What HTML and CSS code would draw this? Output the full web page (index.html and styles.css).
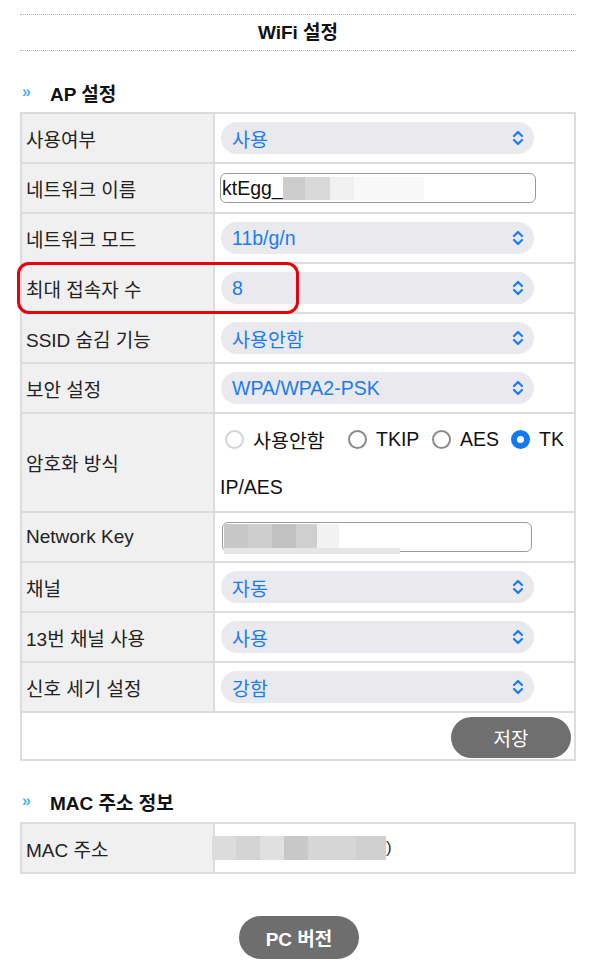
FILE: index.html
```html
<!DOCTYPE html>
<html lang="ko">
<head>
<meta charset="utf-8">
<title>WiFi 설정</title>
<link rel="stylesheet" href="styles.css">
</head>
<body>
<div class="page">
  <h1 class="title">WiFi 설정</h1>

  <div class="sec-head"><span class="chev">»</span><span>AP 설정</span></div>

  <div class="annot-wrap">
    <div class="tbl">
      <div class="lbl">사용여부</div>
      <div class="val"><div class="sel"><span>사용</span><svg class="arr" viewBox="0 0 12 16"><path d="M2 6 L6 2 L10 6 M2 10 L6 14 L10 10"/></svg></div></div>

      <div class="lbl">네트워크 이름</div>
      <div class="val"><div class="inp"><span class="inp-txt">ktEgg_</span><span class="blur b1"></span><span class="blur b2"></span><span class="blur b3"></span><span class="blur b4"></span></div></div>

      <div class="lbl">네트워크 모드</div>
      <div class="val"><div class="sel"><span>11b/g/n</span><svg class="arr" viewBox="0 0 12 16"><path d="M2 6 L6 2 L10 6 M2 10 L6 14 L10 10"/></svg></div></div>

      <div class="lbl">최대 접속자 수</div>
      <div class="val"><div class="sel"><span>8</span><svg class="arr" viewBox="0 0 12 16"><path d="M2 6 L6 2 L10 6 M2 10 L6 14 L10 10"/></svg></div></div>

      <div class="lbl">SSID 숨김 기능</div>
      <div class="val"><div class="sel"><span>사용안함</span><svg class="arr" viewBox="0 0 12 16"><path d="M2 6 L6 2 L10 6 M2 10 L6 14 L10 10"/></svg></div></div>

      <div class="lbl">보안 설정</div>
      <div class="val"><div class="sel"><span>WPA/WPA2-PSK</span><svg class="arr" viewBox="0 0 12 16"><path d="M2 6 L6 2 L10 6 M2 10 L6 14 L10 10"/></svg></div></div>

      <div class="lbl tall">암호화 방식</div>
      <div class="val tall enc">
        <div class="radios">
          <span class="ritem i1"><span class="radio off"></span><span class="rl">사용안함</span></span>
          <span class="ritem i2"><span class="radio"></span><span class="rl">TKIP</span></span>
          <span class="ritem i3"><span class="radio"></span><span class="rl">AES</span></span>
          <span class="ritem i4"><span class="radio on"></span><span class="rl">TK</span></span>
        </div>
        <div class="wrap-line">IP/AES</div>
      </div>

      <div class="lbl">Network Key</div>
      <div class="val"><div class="inp key"><span class="blur k1"></span><span class="blur k2"></span><span class="blur k3"></span><span class="blur k4"></span><span class="blur k5"></span></div></div>

      <div class="lbl">채널</div>
      <div class="val"><div class="sel"><span>자동</span><svg class="arr" viewBox="0 0 12 16"><path d="M2 6 L6 2 L10 6 M2 10 L6 14 L10 10"/></svg></div></div>

      <div class="lbl">13번 채널 사용</div>
      <div class="val"><div class="sel"><span>사용</span><svg class="arr" viewBox="0 0 12 16"><path d="M2 6 L6 2 L10 6 M2 10 L6 14 L10 10"/></svg></div></div>

      <div class="lbl">신호 세기 설정</div>
      <div class="val"><div class="sel"><span>강함</span><svg class="arr" viewBox="0 0 12 16"><path d="M2 6 L6 2 L10 6 M2 10 L6 14 L10 10"/></svg></div></div>

      <div class="save-row"><button class="btn save">저장</button></div>
    </div>
    <div class="annot"></div>
  </div>

  <div class="sec-head mac-head"><span class="chev">»</span><span>MAC 주소 정보</span></div>

  <div class="tbl">
    <div class="lbl">MAC 주소</div>
    <div class="val mac"><span class="blur m1"></span><span class="blur m2"></span><span class="blur m3"></span><span class="blur m4"></span><span class="blur m5"></span><span class="blur m6"></span><span class="mac-end">)</span></div>
  </div>

  <div class="pc-wrap"><button class="btn pc">PC 버전</button></div>
</div>
</body>
</html>
```

FILE: styles.css
```css
* { box-sizing: border-box; }
html, body { margin: 0; padding: 0; background: #fff; }
body {
  font-family: "Liberation Sans", "Noto Sans CJK KR", sans-serif;
  color: #222;
}
.page { padding: 14px 22px 0 20px; }

.title {
  margin: 0;
  height: 37px;
  border-top: 1px dotted #b8b8b8;
  border-bottom: 1px dotted #b8b8b8;
  font-size: 19px;
  font-weight: bold;
  color: #111;
  text-align: center;
  line-height: 35px;
}

.sec-head {
  display: flex;
  align-items: center;
  height: 24px;
  margin: 29px 0 8px;
  font-size: 19px;
  font-weight: bold;
  color: #111;
}
.chev {
  color: #4fb3e6;
  font-size: 16px;
  width: 30px;
  padding-left: 2px;
}
.mac-head { margin: 28px 0 9px; }

.annot-wrap { position: relative; }
.annot {
  position: absolute;
  left: -3px;
  top: 150px;
  width: 282px;
  height: 52px;
  border: 3.5px solid #e8000b;
  border-radius: 12px;
}

.tbl {
  display: grid;
  grid-template-columns: 191px 1fr;
  gap: 2px;
  background: #dcdcdc;
  border: 2px solid #dcdcdc;
}
.lbl {
  background: #f0f0f0;
  height: 48px;
  display: flex;
  align-items: center;
  padding-left: 4px;
  font-size: 19px;
  color: #222;
}
.val {
  background: #fff;
  height: 48px;
  display: flex;
  align-items: center;
  padding-left: 6px;
}
.tall { height: 97px; }

.sel {
  width: 313px;
  height: 32px;
  border-radius: 16px;
  background: #e9e9ee;
  display: flex;
  align-items: center;
  justify-content: space-between;
  padding: 0 10px 0 11px;
  color: #1b7cf2;
  font-size: 19.5px;
}
.arr { width: 12px; height: 16px; }
.arr path { fill: none; stroke: #1b7cf2; stroke-width: 2.2; stroke-linecap: round; stroke-linejoin: round; }

.inp {
  position: relative;
  width: 316px;
  height: 30px;
  margin-left: -1px;
  border: 1.5px solid #9a9a9a;
  border-radius: 6px;
  display: flex;
  align-items: center;
  padding-left: 1px;
  font-size: 19.5px;
  color: #111;
}
.blur { display: block; height: 23px; }
.b1 { width: 22px; background: #cdcdcd; }
.b2 { width: 25px; background: #d8d8d8; }
.b3 { width: 24px; background: #f0f0f0; }
.b4 { width: 70px; background: #f8f8f8; }

.key { width: 310px; margin-left: 1px; align-items: flex-start; padding-top: 1px; }
.key .blur { height: 24px; }
.k1 { width: 24px; background: #c7c7c7; }
.k2 { width: 24px; background: #cecece; }
.k3 { width: 24px; background: #c2c2c2; }
.k4 { width: 21px; background: #cfcfcf; }
.k5 { width: 22px; background: #f2f2f2; }
.key::after {
  content: "";
  position: absolute;
  left: 1px;
  top: 25px;
  width: 176px;
  height: 6px;
  background: #e6e6e6;
}

.enc {
  flex-direction: column;
  align-items: flex-start;
  justify-content: flex-start;
  padding-left: 5px;
  font-size: 19.5px;
  color: #111;
}
.radios {
  display: flex;
  align-items: center;
  height: 48px;
  padding-top: 4px;
  padding-left: 5px;
}
.ritem { display: flex; align-items: center; flex: none; }
.i1 { width: 123px; }
.i2 { width: 84px; }
.i3 { width: 79px; }
.radio {
  width: 19px;
  height: 19px;
  border-radius: 50%;
  border: 2px solid #8a8a8a;
  flex: none;
}
.radio.off { border-color: #d4d4d4; }
.radio.on { border: 6px solid #1478f0; }
.rl { margin-left: 9px; white-space: nowrap; }
.wrap-line { line-height: 48px; margin-top: 2px; }

.save-row {
  grid-column: 1 / 3;
  background: #fff;
  height: 46px;
  display: flex;
  justify-content: flex-end;
  align-items: center;
  padding-right: 3px;
}
.btn {
  border: none;
  color: #fff;
  font-family: "Liberation Sans", "Noto Sans CJK KR", sans-serif;
  font-size: 19px;
  background: #6f6f6f;
  width: 120px;
  border-radius: 22px;
}
.save { height: 41px; margin-top: 2px; }

.mac { position: relative; padding-left: 0; }
.mac .blur { height: 24px; }
.m1 { width: 24px; background: #dcdcdc; margin-left: -3px; }
.m2 { width: 24px; background: #d4d4d4; }
.m3 { width: 24px; background: #e0e0e0; }
.m4 { width: 24px; background: #c8c8c8; }
.m5 { width: 48px; background: #d6d6d6; }
.m6 { width: 30px; background: #d0d0d0; }
.mac-end { font-size: 17px; color: #333; }

.pc-wrap { display: flex; justify-content: center; margin-top: 42px; padding-left: 2px; }
.pc { height: 43px; font-weight: bold; background: #6e6e6e; }
```
